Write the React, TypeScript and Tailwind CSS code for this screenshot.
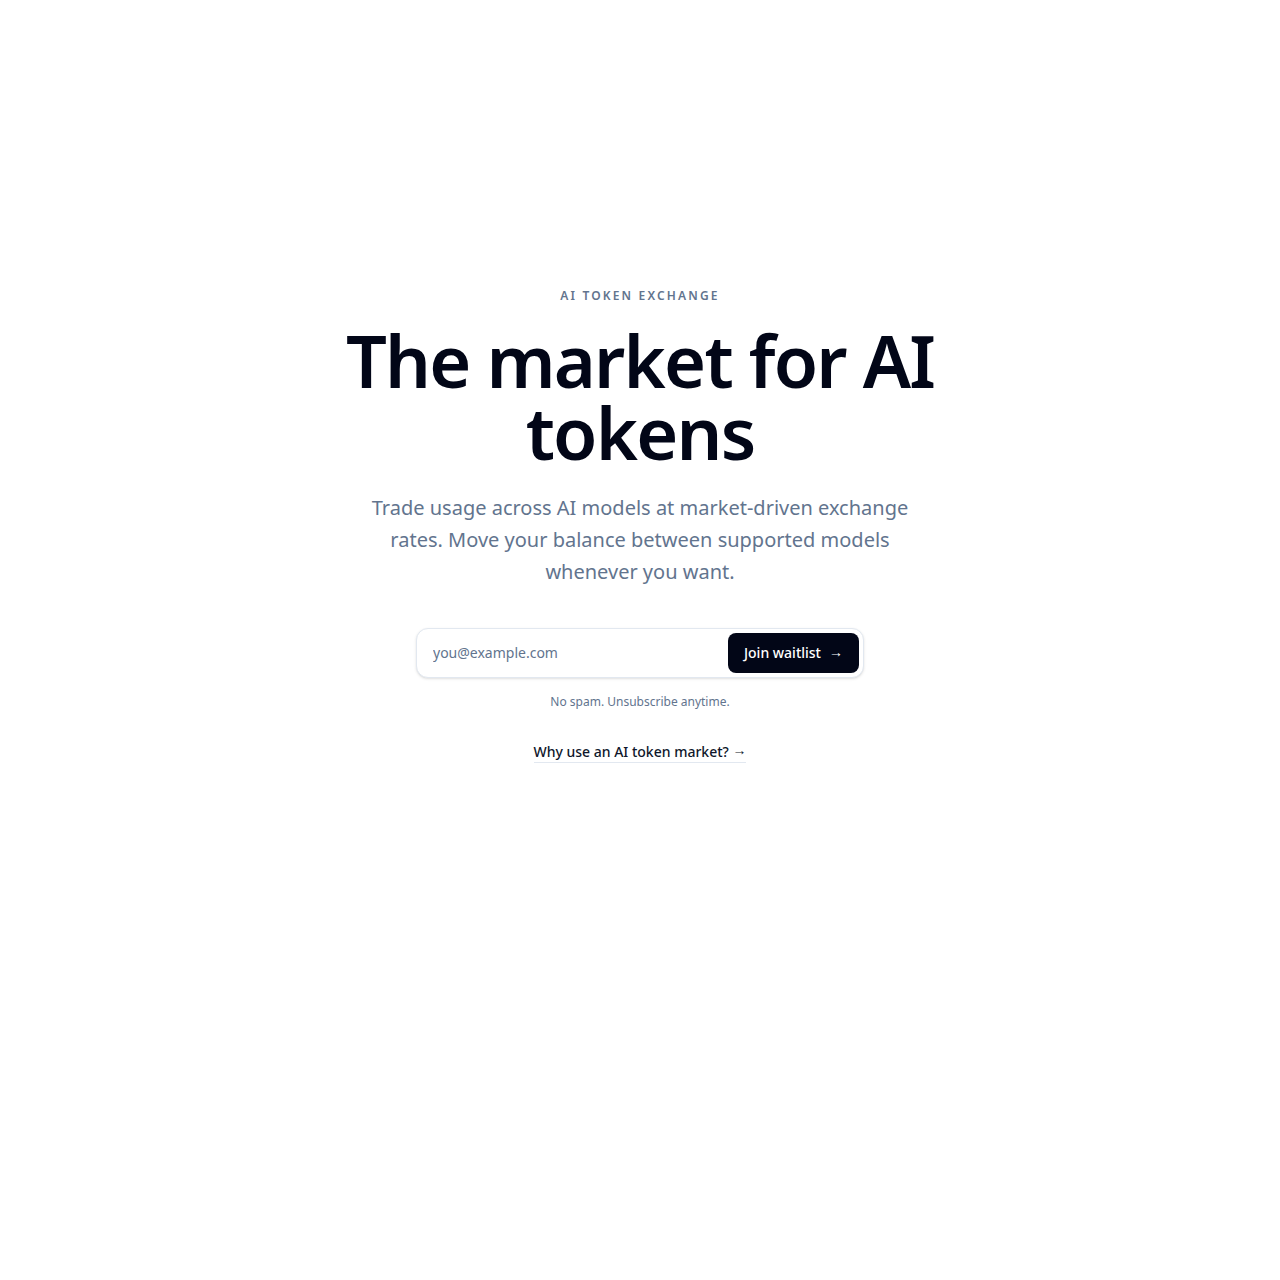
export default function App() {
  return (
    <div
      className="min-h-screen bg-white text-slate-900"
      style={{ fontFamily: '"Noto Sans", sans-serif' }}
    >
      <main className="mx-auto flex max-w-3xl flex-col items-center px-6 pt-[288px] text-center">
        <p className="text-xs font-semibold uppercase tracking-[0.18em] text-slate-500">
          AI Token Exchange
        </p>
        <h1 className="mt-5 text-7xl font-semibold leading-[72px] tracking-tight text-[#020617]">
          The market for AI tokens
        </h1>
        <p className="mt-6 max-w-xl text-xl leading-8 text-slate-500">
          Trade usage across AI models at market-driven exchange rates. Move your balance between supported models whenever you want.
        </p>

        <form
          className="mt-10 flex w-full max-w-md items-center rounded-xl border border-slate-200 bg-white p-1 shadow-sm"
          onSubmit={(e) => e.preventDefault()}
        >
          <input
            type="email"
            placeholder="you@example.com"
            className="h-10 min-w-0 flex-1 bg-transparent px-3 pb-0.5 text-sm text-slate-900 outline-none placeholder:text-slate-500"
          />
          <button
            type="submit"
            className="flex h-10 items-center gap-2 rounded-lg bg-[#020617] px-4 text-sm font-medium text-white"
          >
            Join waitlist
            <span aria-hidden className="-translate-y-px">→</span>
          </button>
        </form>
        <p className="mt-4 text-xs text-slate-500">No spam. Unsubscribe anytime.</p>

        <a
          href="#why"
          className="mt-8 border-b border-slate-200 text-sm font-medium text-slate-900"
        >
          Why use an AI token market?{" "}
          <span aria-hidden className="inline-block -translate-y-0.5">→</span>
        </a>
      </main>
    </div>
  );
}
